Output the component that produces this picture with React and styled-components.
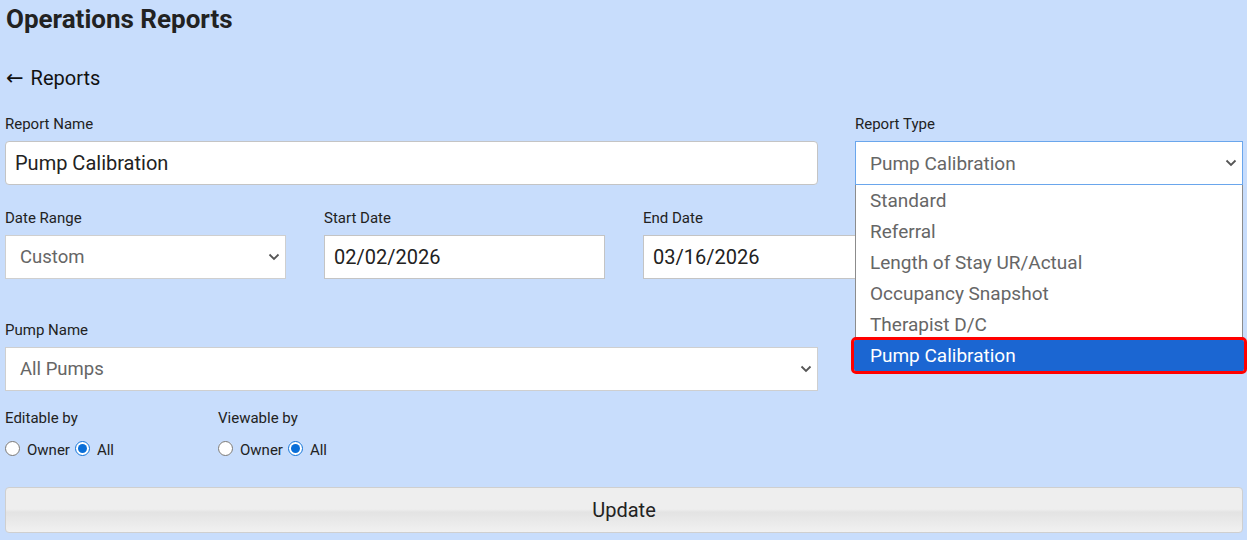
import React from 'react';
import styled, { createGlobalStyle } from 'styled-components';

const GlobalStyle = createGlobalStyle`
  body {
    margin: 0;
    background: #c8ddfc;
    font-family: Roboto, "Liberation Sans", sans-serif;
    color: #222;
  }
`;

const Page = styled.div`
  padding: 0 4px 0 5px;
  width: 1238px;
`;

const Title = styled.h1`
  margin: 0;
  padding-top: 4px;
  font-size: 26px;
  line-height: 30px;
  font-weight: 700;
  color: #222;
  padding-left: 1px;
`;

const BackLink = styled.a`
  display: flex;
  align-items: center;
  margin-top: 32px;
  font-size: 20px;
  line-height: 24px;
  color: #111;
  text-decoration: none;
  padding-left: 1px;
`;

const Arrow = styled.span`
  font-family: "DejaVu Sans", sans-serif;
  font-size: 21px;
  margin-right: 7px;
`;

const Row = styled.div`
  display: grid;
  grid-template-columns: ${(p) => p.$cols};
  column-gap: ${(p) => p.$gap || '38px'};
  margin-top: ${(p) => p.$top};
`;

const Field = styled.div`
  display: flex;
  flex-direction: column;
  position: relative;
`;

const Label = styled.label`
  font-size: 15px;
  line-height: 20px;
  color: #222;
  margin-bottom: 7px;
`;

const TextBox = styled.div`
  box-sizing: border-box;
  height: 44px;
  background: #fff;
  border: 1px solid #c4c4c4;
  border-radius: ${(p) => (p.$square ? '0' : '4px')};
  padding: 0 9px;
  display: flex;
  align-items: center;
  font-size: 20px;
  color: #222;
`;

const SelectBox = styled.div`
  box-sizing: border-box;
  height: 44px;
  background: #fff;
  border: 1px solid ${(p) => (p.$focus ? '#6aa6ec' : '#cfcfcf')};
  padding: 0 5px 0 14px;
  display: flex;
  align-items: center;
  justify-content: space-between;
  font-size: ${(p) => (p.$focus ? '19px' : '18.5px')};
  color: #666;
`;

const Chevron = () => (
  <svg width="12" height="8" viewBox="0 0 12 8">
    <path d="M1.5 1.5 L6 6 L10.5 1.5" fill="none" stroke="#555" strokeWidth="1.8" />
  </svg>
);

const Listbox = styled.ul`
  position: absolute;
  top: 71px;
  left: 0;
  right: 0;
  margin: 0;
  padding: 0;
  list-style: none;
  background: #fff;
  border: 1px solid #8c8c8c;
  border-top: none;
  box-sizing: border-box;
  z-index: 2;
`;

const Option = styled.li`
  height: 31px;
  line-height: 31px;
  font-size: 19px;
  color: ${(p) => (p.$active ? '#fff' : '#666')};
  background: ${(p) => (p.$active ? '#1b66d2' : 'transparent')};
  outline: ${(p) => (p.$active ? '3px solid #f00' : 'none')};
  border-radius: ${(p) => (p.$active ? '2px' : '0')};
  margin: ${(p) => (p.$active ? '0 -2px 0 -2px' : '0')};
  padding-left: ${(p) => (p.$active ? '16px' : '14px')};
  position: relative;
`;

const RadioGroupRow = styled.div`
  display: flex;
  align-items: center;
  margin-top: 4px;
  font-size: 15px;
  color: #222;
`;

const Radio = styled.input.attrs({ type: 'radio' })`
  margin: 0 7px 0 0;
  width: 15px;
  height: 15px;
  accent-color: #0a6fd8;
  position: relative;
  top: -2px;
`;

const RadioText = styled.span`
  margin-right: 5px;
  line-height: 20px;
`;

const Perm = styled.div`
  display: flex;
  flex-direction: column;
  width: 213px;
`;

const PermRow = styled.div`
  display: flex;
  margin-top: 17px;
`;

const PermLabel = styled.div`
  font-size: 15px;
  line-height: 20px;
  color: #222;
  margin-bottom: 8px;
`;

const UpdateButton = styled.button`
  display: block;
  width: 100%;
  height: 46px;
  margin-top: 27px;
  border: 1px solid #cfcfcf;
  border-radius: 4px;
  background: linear-gradient(#eeeeee 0%, #eeeeee 48%, #e3e3e3 55%, #f1f1f1 100%);
  font-family: Roboto, "Liberation Sans", sans-serif;
  font-size: 20px;
  color: #222;
  cursor: pointer;
`;

const reportTypes = [
  'Standard',
  'Referral',
  'Length of Stay UR/Actual',
  'Occupancy Snapshot',
  'Therapist D/C',
  'Pump Calibration',
];

const Permission = ({ label, name }) => (
  <Perm>
    <PermLabel>{label}</PermLabel>
    <RadioGroupRow>
      <Radio name={name} />
      <RadioText>Owner</RadioText>
      <Radio name={name} defaultChecked />
      <RadioText>All</RadioText>
    </RadioGroupRow>
  </Perm>
);

export default function App() {
  return (
    <>
      <GlobalStyle />
      <Page>
        <Title>Operations Reports</Title>
        <BackLink href="#">
          <Arrow>←</Arrow>Reports
        </BackLink>

        <Row $cols="813px 388px" $gap="37px" $top="24px" style={{ position: 'relative', zIndex: 2 }}>
          <Field>
            <Label>Report Name</Label>
            <TextBox>Pump Calibration</TextBox>
          </Field>
          <Field>
            <Label>Report Type</Label>
            <SelectBox $focus>
              Pump Calibration
              <Chevron />
            </SelectBox>
            <Listbox>
              {reportTypes.map((t) => (
                <Option key={t} $active={t === 'Pump Calibration'}>
                  {t}
                </Option>
              ))}
            </Listbox>
          </Field>
        </Row>

        <Row $cols="repeat(4, 281px)" $top="23px">
          <Field>
            <Label>Date Range</Label>
            <SelectBox>
              Custom
              <Chevron />
            </SelectBox>
          </Field>
          <Field>
            <Label>Start Date</Label>
            <TextBox $square>02/02/2026</TextBox>
          </Field>
          <Field>
            <Label>End Date</Label>
            <TextBox $square>03/16/2026</TextBox>
          </Field>
          <Field />
        </Row>

        <Row $cols="813px 388px" $gap="37px" $top="41px">
          <Field>
            <Label>Pump Name</Label>
            <SelectBox>
              All Pumps
              <Chevron />
            </SelectBox>
          </Field>
        </Row>

        <PermRow>
          <Permission label="Editable by" name="edit" />
          <Permission label="Viewable by" name="view" />
        </PermRow>

        <UpdateButton>Update</UpdateButton>
      </Page>
    </>
  );
}
